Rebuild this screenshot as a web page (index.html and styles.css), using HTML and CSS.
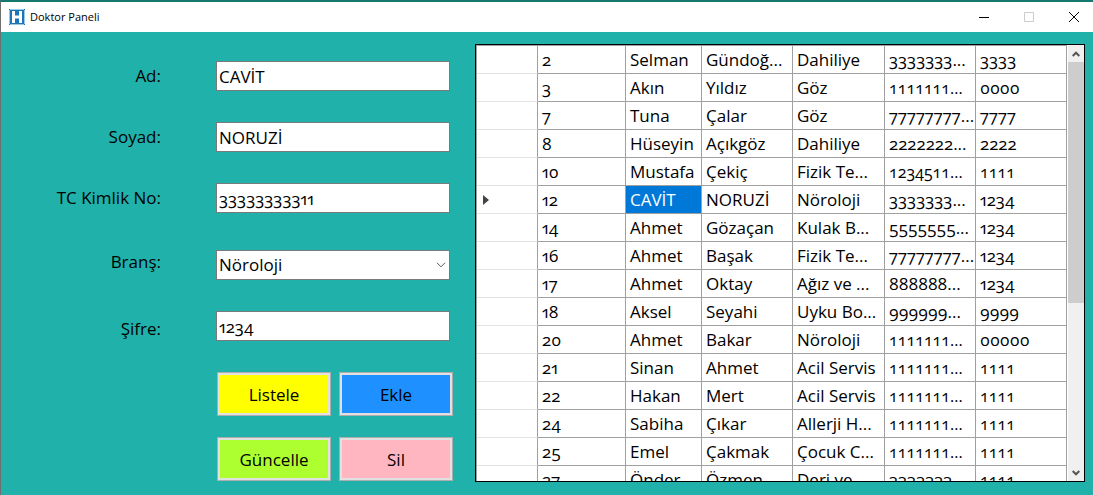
FILE: index.html
```html
<!DOCTYPE html>
<html lang="tr">
<head>
<meta charset="utf-8">
<meta name="viewport" content="width=device-width, initial-scale=1">
<title>Doktor Paneli</title>
<link rel="stylesheet" href="styles.css">
</head>
<body>
<div class="window">
  <header class="titlebar">
    <svg class="app-icon" viewBox="0 0 16 16" aria-hidden="true">
      <rect x="0" y="0" width="16" height="16" fill="#9cc9e3"/>
      <rect x="1" y="1" width="14" height="14" fill="#1b75b8"/>
      <path d="M0 0h1v1H0zM15 0h1v1h-1zM0 15h1v1H0zM15 15h1v1h-1z" fill="#1b75b8"/>
      <path d="M3 2h3v4.500h4V2h3v12h-3V9.500H6V14H3z" fill="#fff"/>
    </svg>
    <h1 class="title">Doktor Paneli</h1>
    <div class="window-controls">
      <button class="control" type="button" aria-label="Simge durumuna küçült"><svg viewBox="0 0 10 10"><path d="M0 5.500h10" stroke="#000"/></svg></button>
      <button class="control" type="button" aria-label="Ekranı kapla" disabled><svg viewBox="0 0 10 10"><path d="M.5.500h9v9h-9z" stroke="#ccc"/></svg></button>
      <button class="control" type="button" aria-label="Kapat"><svg viewBox="0 0 10 10"><path d="M0 0l10 10M10 0L0 10" stroke="#000"/></svg></button>
    </div>
  </header>
  <main class="client">
    <form class="form">
      <div class="field"><label for="ad">Ad:</label><input id="ad" type="text" value="CAVİT"></div>
      <div class="field"><label for="soyad">Soyad:</label><input id="soyad" type="text" value="NORUZİ"></div>
      <div class="field"><label for="tc">TC Kimlik No:</label><input id="tc" type="text" value="33333333311"></div>
      <div class="field field-branch"><label for="brans">Branş:</label>
        <span class="combo"><select id="brans"><option>Nöroloji</option></select><svg class="chevron" viewBox="0 0 10 6" aria-hidden="true"><path d="M1 .8l4 4 4-4"/></svg></span>
      </div>
      <div class="field field-password"><label for="sifre">Şifre:</label><input id="sifre" type="text" value="1234"></div>
      <div class="actions">
        <button class="action list" type="button">Listele</button>
        <button class="action add" type="button">Ekle</button>
        <button class="action update" type="button">Güncelle</button>
        <button class="action delete" type="button">Sil</button>
      </div>
    </form>
    <section class="records" aria-label="Doktorlar">
      <div class="viewport">
        <table>
          <colgroup><col class="c-head"><col class="c-id"><col class="c-name"><col class="c-text"><col class="c-branch"><col class="c-text"><col class="c-text"></colgroup>
          <tbody>
            <tr><th scope="row"></th><td>2</td><td>Selman</td><td>Gündoğ...</td><td>Dahiliye</td><td>3333333...</td><td>3333</td></tr>
            <tr><th scope="row"></th><td>3</td><td>Akın</td><td>Yıldız</td><td>Göz</td><td class="tabular">1111111...</td><td>0000</td></tr>
            <tr><th scope="row"></th><td>7</td><td>Tuna</td><td>Çalar</td><td>Göz</td><td>77777777...</td><td>7777</td></tr>
            <tr><th scope="row"></th><td>8</td><td>Hüseyin</td><td>Açıkgöz</td><td>Dahiliye</td><td>2222222...</td><td>2222</td></tr>
            <tr><th scope="row"></th><td>10</td><td>Mustafa</td><td>Çekiç</td><td>Fizik Te...</td><td class="tabular">1234511...</td><td class="tabular">1111</td></tr>
            <tr><th scope="row"><svg class="marker" viewBox="0 0 6 10" aria-label="Geçerli satır"><path d="M0 0l6 5-6 5z" fill="#444"/></svg></th><td>12</td><td class="selected">CAVİT</td><td>NORUZİ</td><td>Nöroloji</td><td>3333333...</td><td>1234</td></tr>
            <tr><th scope="row"></th><td>14</td><td>Ahmet</td><td>Gözaçan</td><td>Kulak B...</td><td>5555555...</td><td>1234</td></tr>
            <tr><th scope="row"></th><td>16</td><td>Ahmet</td><td>Başak</td><td>Fizik Te...</td><td>77777777...</td><td>1234</td></tr>
            <tr><th scope="row"></th><td>17</td><td>Ahmet</td><td>Oktay</td><td>Ağız ve ...</td><td>888888...</td><td>1234</td></tr>
            <tr><th scope="row"></th><td>18</td><td>Aksel</td><td>Seyahi</td><td>Uyku Bo...</td><td>999999...</td><td>9999</td></tr>
            <tr><th scope="row"></th><td>20</td><td>Ahmet</td><td>Bakar</td><td>Nöroloji</td><td class="tabular">1111111...</td><td>00000</td></tr>
            <tr><th scope="row"></th><td>21</td><td>Sinan</td><td>Ahmet</td><td>Acil Servis</td><td class="tabular">1111111...</td><td class="tabular">1111</td></tr>
            <tr><th scope="row"></th><td>22</td><td>Hakan</td><td>Mert</td><td>Acil Servis</td><td class="tabular">1111111...</td><td class="tabular">1111</td></tr>
            <tr><th scope="row"></th><td>24</td><td>Sabiha</td><td>Çıkar</td><td>Allerji H...</td><td class="tabular">1111111...</td><td class="tabular">1111</td></tr>
            <tr><th scope="row"></th><td>25</td><td>Emel</td><td>Çakmak</td><td>Çocuk C...</td><td class="tabular">1111111...</td><td class="tabular">1111</td></tr>
            <tr><th scope="row"></th><td>27</td><td>Önder</td><td>Özmen</td><td>Deri ve ...</td><td>3333333...</td><td class="tabular">1111</td></tr>
          </tbody>
        </table>
      </div>
      <div class="scrollbar">
        <button class="arrow" type="button" aria-label="Yukarı kaydır"><svg viewBox="0 0 8 6"><path d="M.7 5L4 1.700 7.300 5"/></svg></button>
        <div class="track"><div class="thumb"></div></div>
        <button class="arrow" type="button" aria-label="Aşağı kaydır"><svg viewBox="0 0 8 6"><path d="M.7 1L4 4.300 7.300 1"/></svg></button>
      </div>
    </section>
  </main>
</div>
</body>
</html>
```

FILE: styles.css
```css
* { box-sizing: border-box; }

body {
  margin: 0;
  color: #000;
  font-family: "Open Sans", "Noto Sans", sans-serif;
  font-size: 17px;
  font-variant-numeric: oldstyle-nums proportional-nums;
}

button, input, select { font: inherit; font-variant-numeric: inherit; color: inherit; }

.window {
  display: flex;
  flex-direction: column;
  height: 100vh;
  border-top: 2px solid #16796f;
  border-left: 1px solid #6f6f6f;
  background: #20b2aa;
}

/* Title bar */
.titlebar {
  display: flex;
  align-items: center;
  flex: none;
  height: 30px;
  padding-left: 8px;
  background: #fff;
}
.app-icon { width: 16px; height: 16px; margin-right: 5px; }
.title { margin: 0; font-size: 11px; font-weight: 400; line-height: 16px; }
.window-controls { display: flex; gap: 6px; margin-left: auto; }
.control {
  display: grid;
  place-items: center;
  width: 39px;
  height: 28px;
  padding: 0;
  border: 0;
  background: none;
}
.control svg { width: 10px; height: 10px; fill: none; }

/* Client area */
.client {
  display: flex;
  flex: 1;
  gap: 22px;
  min-height: 0;
  padding: 12px 8px 13px 0;
}

.form {
  display: flex;
  flex: none;
  flex-direction: column;
  gap: 31px;
  width: 452px;
  padding-top: 17px;
}
.field {
  display: grid;
  grid-template-columns: 160px 234px;
  column-gap: 55px;
  align-items: center;
}
.field-branch { margin-top: 6px; }
.field label { text-align: right; line-height: 24px; }
.field-branch label { align-self: start; }
.field-password label { align-self: end; }
.field input,
.field select {
  width: 100%;
  height: 30px;
  margin: 0;
  padding: 0 2px;
  border: 1px solid #7a7a7a;
  border-radius: 0;
  background: #fff;
  line-height: 24px;
  outline: 0;
}
.combo { display: grid; align-items: center; }
.combo select, .chevron { grid-area: 1 / 1; }
.field select { appearance: none; }
.chevron {
  justify-self: end;
  width: 10px;
  height: 6px;
  margin-right: 4px;
  fill: none;
  stroke: #555;
  pointer-events: none;
}

.actions {
  display: grid;
  grid-template-columns: 114px 114px;
  gap: 21px 8px;
  justify-content: end;
}
.action {
  height: 44px;
  padding: 0;
  border: 1px solid #adadad;
  box-shadow: inset 0 0 0 2px #e1e1e1;
}
.list { background: #ff0; }
.add { background: #1e90ff; }
.update { background: #adff2f; }
.delete { background: #ffb6c1; }

/* Data grid */
.records {
  display: flex;
  flex: 1;
  min-width: 0;
  border: 1px solid #000;
  background: #fff;
}
.viewport {
  flex: 1;
  min-width: 0;
  overflow: hidden;
  border-top: 1px solid #a0a0a0;
  border-left: 1px solid #a0a0a0;
}
table {
  width: 100%;
  border-spacing: 0;
  table-layout: fixed;
}
.c-head { width: 61px; }
.c-id { width: 88px; }
.c-name { width: 76px; }
.c-branch { width: 92px; }
th, td {
  height: 28px;
  padding: 1px 0 0 4px;
  overflow: hidden;
  border-right: 1px solid #a0a0a0;
  border-bottom: 1px solid #a0a0a0;
  line-height: 26px;
  white-space: nowrap;
}
th {
  padding-left: 6px;
  border-bottom-color: #e3e3e3;
  text-align: left;
}
.tabular {
  font-size: 16px;
  font-variant-numeric: oldstyle-nums tabular-nums;
}
.marker { display: block; width: 6px; height: 10px; }
.selected { background: #0078d7; color: #fff; }

.scrollbar {
  display: flex;
  flex: none;
  flex-direction: column;
  width: 17px;
  border-left: 1px solid #fff;
  background: #f0f0f0;
}
.arrow {
  display: grid;
  place-items: center;
  width: 100%;
  height: 17px;
  padding: 0;
  border: 0;
  background: none;
}
.arrow svg { width: 8px; height: 6px; fill: none; stroke: #555; stroke-width: 2; }
.track { flex: 1; }
.thumb { height: 60%; background: #cdcdcd; }
```
